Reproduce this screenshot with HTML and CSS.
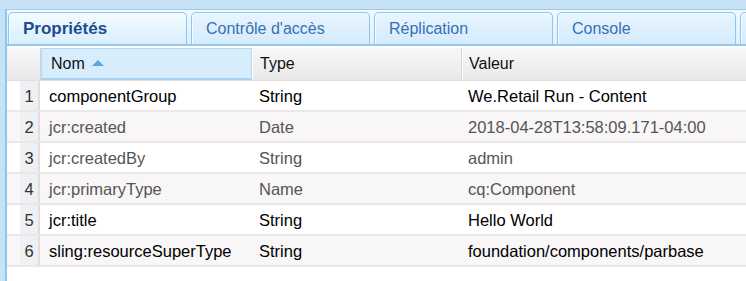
FILE: index.html
```html
<!DOCTYPE html>
<html>
<head>
<meta charset="utf-8">
<link rel="stylesheet" href="styles.css">
</head>
<body>
<div class="frame">
  <div class="panel">
    <div class="tabstrip">
      <div class="tab active">Propriétés</div>
      <div class="tab">Contrôle d'accès</div>
      <div class="tab">Réplication</div>
      <div class="tab">Console</div>
      <div class="tab"></div>
    </div>
    <div class="gap"></div>
    <div class="hrow">
      <div class="hlead"></div>
      <div class="hcell nom sorted">Nom <span class="arrow"></span></div>
      <div class="hcell type">Type</div>
      <div class="hcell val">Valeur</div>
    </div>
    <div class="row odd"><div class="sp"></div><div class="num">1</div><div class="cell nom">componentGroup</div><div class="cell type">String</div><div class="cell val">We.Retail Run - Content</div></div>
    <div class="row even dim"><div class="sp"></div><div class="num">2</div><div class="cell nom">jcr:created</div><div class="cell type">Date</div><div class="cell val">2018-04-28T13:58:09.171-04:00</div></div>
    <div class="row odd dim"><div class="sp"></div><div class="num">3</div><div class="cell nom">jcr:createdBy</div><div class="cell type">String</div><div class="cell val">admin</div></div>
    <div class="row even dim"><div class="sp"></div><div class="num">4</div><div class="cell nom">jcr:primaryType</div><div class="cell type">Name</div><div class="cell val">cq:Component</div></div>
    <div class="row odd"><div class="sp"></div><div class="num">5</div><div class="cell nom">jcr:title</div><div class="cell type">String</div><div class="cell val">Hello World</div></div>
    <div class="row even"><div class="sp"></div><div class="num">6</div><div class="cell nom">sling:resourceSuperType</div><div class="cell type">String</div><div class="cell val">foundation/components/parbase</div></div>
    <div class="rest"></div>
  </div>
</div>
</body>
</html>
```
FILE: styles.css
```css
html, body {
  margin: 0;
  padding: 0;
  background: #fff;
}
body {
  font-family: "Liberation Sans", Arial, Helvetica, sans-serif;
  font-size: 16px;
  width: 746px;
  height: 281px;
  overflow: hidden;
}
.frame {
  background: #c6e2f7;
  padding: 9px 0 0 5px;
  height: 272px;
}
.panel {
  background: #fff;
  border-left: 2px solid #8fc6ef;
  border-top: 1px solid #9ccbee;
  height: 271px;
  overflow: hidden;
}
.tabstrip {
  display: flex;
  gap: 4px;
  padding: 2px 0 0 1px;
  background: linear-gradient(#f2f9ff, #dcefff);
  border-bottom: 2px solid #94c8ee;
  height: 32px;
  white-space: nowrap;
}
.tab {
  flex: 0 0 auto;
  width: 179px;
  height: 32px;
  border: 1px solid #8fc5ee;
  border-bottom: none;
  border-radius: 5px 5px 0 0;
  background: linear-gradient(#e8f5ff, #d4ebfc);
  box-shadow: inset 1px 1px 0 #f4faff;
  color: #3570b4;
  padding-left: 14px;
  line-height: 32px;
  box-sizing: border-box;
}
.tab.active {
  background: linear-gradient(#f4fbff, #d8eefd);
  color: #1c4d8e;
  font-weight: bold;
  font-size: 17px;
}
.gap {
  height: 2px;
}
.hrow {
  display: flex;
  height: 33px;
  background: linear-gradient(#f8f7f7, #eae9ea);
  border-bottom: 1px solid #e2dede;
  box-sizing: border-box;
}
.hlead {
  width: 33px;
  border-right: 1px solid #d9d4d6;
}
.hcell {
  line-height: 32px;
  color: #111;
  box-sizing: border-box;
  border-right: 1px solid #d9d4d6;
  box-shadow: inset 1px 0 0 #fff;
}
.hcell.sorted {
  background: #d8edfc;
  border: 1px solid #b3d8f4;
  border-bottom: 2px solid #a9d2f1;
  line-height: 29px;
  box-shadow: none;
}
.nom { width: 211px; padding-left: 9px; box-sizing: border-box; }
.type { width: 210px; padding-left: 8px; box-sizing: border-box; }
.val { flex: 1; padding-left: 7px; border-right: none; }
.arrow {
  display: inline-block;
  width: 0;
  height: 0;
  border-left: 6px solid transparent;
  border-right: 6px solid transparent;
  border-bottom: 6px solid #5ba4e0;
  margin-left: 3px;
  vertical-align: 3px;
}
.row {
  display: flex;
  height: 31px;
  border-bottom: 2px solid #ebe7e8;
  box-sizing: border-box;
  color: #000;
  font-size: 16.5px;
}
.row.odd { background: #fff; }
.row.even { background: #f8f6f7; }
.row.dim { color: #555; }
.sp { width: 13px; }
.num {
  width: 18px;
  background: #eef0f4;
  border-right: 2px solid #e4dcdd;
  text-align: center;
  line-height: 30px;
  color: #333;
}
.cell {
  line-height: 30px;
  white-space: nowrap;
}
.cell.nom { padding-left: 9px; }
.rest { height: 20px; }
```
